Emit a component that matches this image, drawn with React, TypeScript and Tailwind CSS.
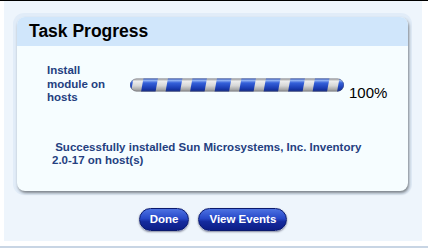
import React from "react";

function StripedBar() {
  const segments = [-1, 0, 1, 2, 3, 4, 5, 6, 7, 8];
  return (
    <svg width="214" height="14" viewBox="0 0 214 14" className="block">
      <defs>
        <clipPath id="barClip">
          <rect x="0" y="0.5" width="214" height="13" rx="6.5" />
        </clipPath>
        <linearGradient id="grayFill" x1="0" y1="0" x2="0" y2="1">
          <stop offset="0" stopColor="#9c9c9c" />
          <stop offset="0.25" stopColor="#ececec" />
          <stop offset="0.55" stopColor="#d6d6d6" />
          <stop offset="1" stopColor="#8a8a8a" />
        </linearGradient>
        <linearGradient id="blueFill" x1="0" y1="0" x2="0" y2="1">
          <stop offset="0" stopColor="#2f56cc" />
          <stop offset="0.18" stopColor="#8fb0f3" />
          <stop offset="0.35" stopColor="#3561da" />
          <stop offset="0.7" stopColor="#1c3fb6" />
          <stop offset="1" stopColor="#0c2382" />
        </linearGradient>
      </defs>
      <g clipPath="url(#barClip)">
        <rect x="0" y="0" width="214" height="14" fill="url(#grayFill)" />
        {segments.map((i) => {
          const x = 11 + i * 24.5;
          return (
            <polygon
              key={i}
              points={`${x + 2.5},0 ${x + 17},0 ${x + 14.5},14 ${x},14`}
              fill="url(#blueFill)"
            />
          );
        })}
      </g>
      <rect x="0.4" y="0.9" width="213.2" height="12.2" rx="6.1" fill="none" stroke="#5a5a6a" strokeOpacity="0.45" strokeWidth="0.8" />
    </svg>
  );
}

function PillButton({ label }: { label: string }) {
  return (
    <button
      type="button"
      className="h-[23px] rounded-full border border-[#0b1a6e] bg-[linear-gradient(to_bottom,#4d72e2,#2748c8_45%,#152b9e_60%,#0c1d86)] px-[10px] text-[11.5px] font-bold leading-none text-white shadow-[0_1px_2px_rgba(0,0,40,0.45)]"
    >
      {label}
    </button>
  );
}

export default function App() {
  return (
    <div className="h-[248px] w-[428px] overflow-hidden border-t border-black bg-white font-['Liberation_Sans',Arial,sans-serif]">
      <div className="ml-[4px] flex h-[240px] w-[418px] flex-col bg-[#eef5fc] px-[9px] pt-[12px]">
        <div className="w-[399px] rounded-[11px] bg-[#e1ecf8] p-[4px]">
          <div className="h-[174px] overflow-hidden rounded-[8px] bg-[#f6fdff] shadow-[1px_2px_3px_rgba(0,0,0,0.45)]">
            <div className="flex h-[29px] items-center bg-[#d0e6fb] pl-[12px]">
              <span className="text-[17.5px] font-bold leading-none text-black">Task Progress</span>
            </div>
            <div className="flex pl-[30px] pt-[18px]">
              <div className="w-[83px] text-[11.5px] font-bold leading-[13.5px] text-[#24407f]">
                Install
                <br />
                module on
                <br />
                hosts
              </div>
              <div className="mt-[14px]">
                <StripedBar />
              </div>
              <span className="ml-[5px] mt-[21px] text-[15px] leading-[15px] text-black">100%</span>
            </div>
            <p className="mt-[36px] pl-[35px] text-[11.5px] font-bold leading-[13px] text-[#24407f]">
              {"\u00a0"}Successfully installed Sun Microsystems, Inc. Inventory
              <br />
              2.0-17 on host(s)
            </p>
          </div>
        </div>
        <div className="mt-[13px] flex justify-center gap-[9px]">
          <PillButton label="Done" />
          <PillButton label="View Events" />
        </div>
      </div>
      <div className="mt-[5px] h-[2px] w-full bg-[#c8d5e4]" />
    </div>
  );
}
